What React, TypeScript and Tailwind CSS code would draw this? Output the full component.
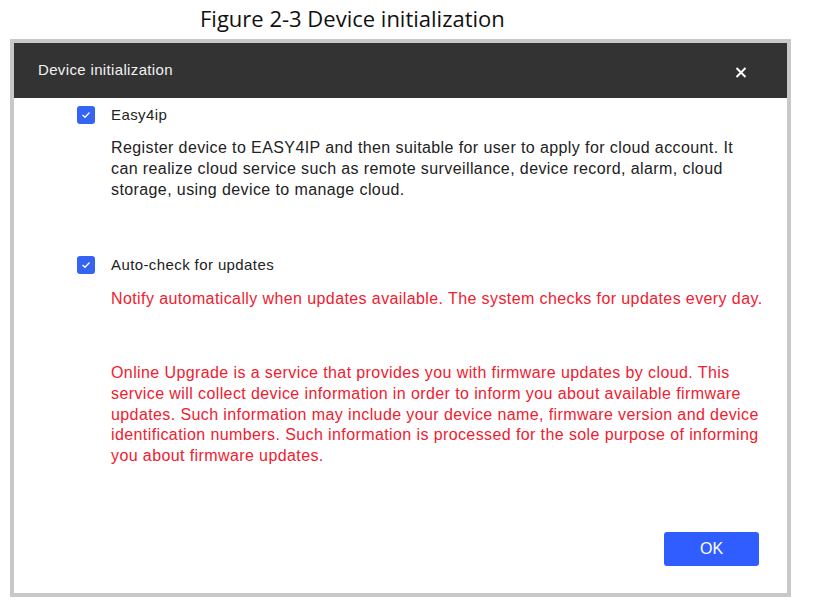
export default function App() {
  return (
    <div className="w-[825px] h-[606px] bg-white relative overflow-hidden">
      <div className="h-[39px] flex items-start pt-[7px] pl-[200px]">
        <h1 className="text-[22px] text-[#111] leading-none font-['Open_Sans',sans-serif]">
          Figure 2-3 Device initialization
        </h1>
      </div>

      <div className="ml-[10px] w-[781px] h-[558px] border-4 border-[#c8c8c8] flex flex-col font-['Liberation_Sans',Arial,sans-serif]">
        <div className="h-[55px] shrink-0 bg-[#333333] flex items-center justify-between pl-[24px] pr-[40px]">
          <span className="text-[15px] tracking-[0.35px] text-[#f2f2f2]">Device initialization</span>
          <svg width="12" height="11" viewBox="0 0 12 11" className="mt-[4px]" fill="none">
            <path d="M1.5 1 L10.5 10 M10.5 1 L1.5 10" stroke="white" strokeWidth="2" />
          </svg>
        </div>

        <div className="flex-1 flex flex-col pl-[63px] pr-[28px]">
          <Row label="Easy4ip" className="mt-[8px]" />
          <p className="ml-[34px] mt-[13px] text-[16px] tracking-[0.4px] leading-[21px] text-[#222] whitespace-nowrap">
            Register device to EASY4IP and then suitable for user to apply for cloud account. It
            <br />
            can realize cloud service such as remote surveillance, device record, alarm, cloud
            <br />
            storage, using device to manage cloud.
          </p>

          <Row label="Auto-check for updates" className="mt-[56px]" />
          <p className="ml-[34px] mt-[14px] text-[16px] tracking-[0.4px] leading-[21px] text-[#f0202f] whitespace-nowrap">
            Notify automatically when updates available. The system checks for updates every day.
          </p>

          <p className="ml-[34px] mt-[54px] text-[16px] tracking-[0.4px] leading-[20.8px] text-[#f0202f] whitespace-nowrap">
            Online Upgrade is a service that provides you with firmware updates by cloud. This
            <br />
            service will collect device information in order to inform you about available firmware
            <br />
            updates. Such information may include your device name, firmware version and device
            <br />
            identification numbers. Such information is processed for the sole purpose of informing
            <br />
            you about firmware updates.
          </p>

          <div className="mt-auto mb-[27px] flex justify-end">
            <button className="w-[95px] h-[34px] rounded-[3px] bg-[#2f5dff] text-white text-[16px]">
              OK
            </button>
          </div>
        </div>
      </div>
    </div>
  );
}

function Row({ label, className }: { label: string; className?: string }) {
  return (
    <div className={"flex items-center gap-[16px] h-[18px] " + (className ?? "")}>
      <span className="w-[18px] h-[18px] rounded-[3px] bg-[#3563f2] flex items-center justify-center">
        <svg width="10" height="8" viewBox="0 0 10 8" fill="none">
          <path d="M1.5 4 L4 6.3 L8.5 1.5" stroke="white" strokeWidth="1.3" />
        </svg>
      </span>
      <span className="text-[15px] tracking-[0.4px] text-[#222]">{label}</span>
    </div>
  );
}
